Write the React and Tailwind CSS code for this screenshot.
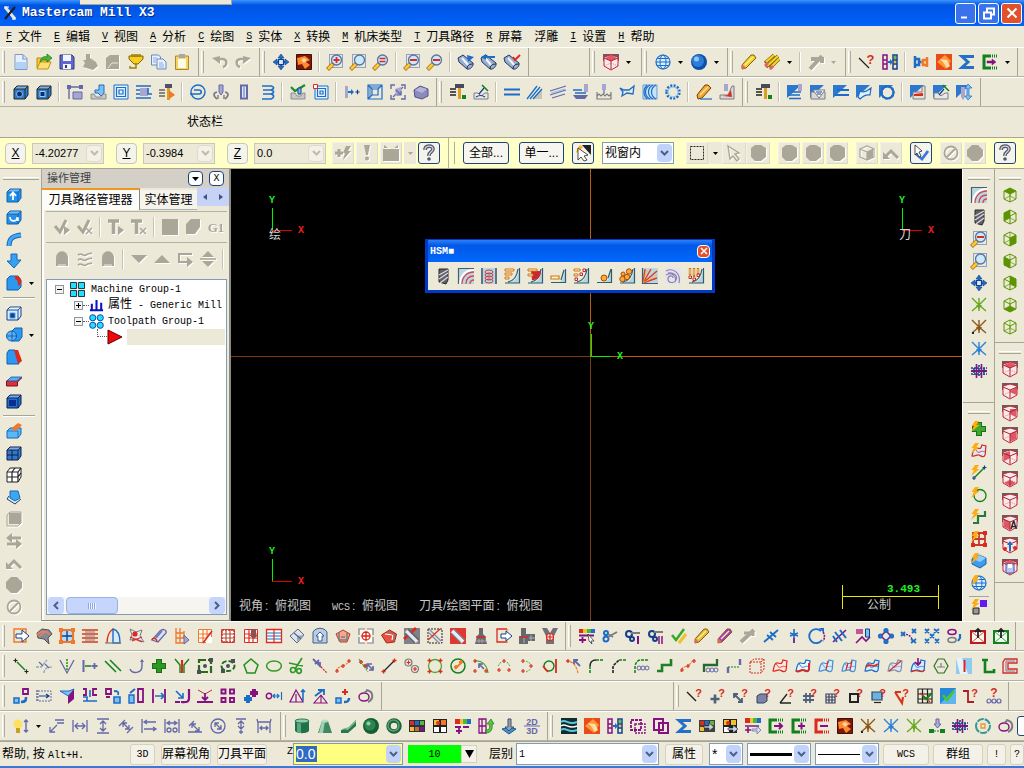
import React from "react";

/* ---------- drawing helpers for the 16x16 icon set ---------- */
const f = (c, d) => ({ fill: c, d });
const s = (c, d, w = 1.2, dash) => ({ stroke: c, d, w, dash });
const fs = (c, k, d, w = 1) => ({ fill: c, stroke: k, d, w });
const t = (c, x, y, size, v, sans) => ({ text: v, fill: c, x, y, size, sans });
const o = (x, y, r, q = r) => `M${x - r} ${y}a${r} ${q} 0 1 0 ${2 * r} 0a${r} ${q} 0 1 0 ${-2 * r} 0z`;
const box = (x, y, w, h = w) => `M${x} ${y}h${w}v${h}h${-w}z`;
const pl = (x, y, r = 2) => `M${x - r} ${y}h${2 * r}M${x} ${y - r}v${2 * r}`;

const B = "#1c6cc8", C = "#7cc0f4", N = "#153f88", P = "#85107f", R = "#dc2a1c", O = "#f07828";
const G = "#12801c", E = "#52a838", Y = "#f2c22c", K = "#222222", V = "#6468a8", W = "#a6a6d0";
const D = "#aaa798", H = "#7c7c80", S = "#dcecff", GD = "#5c9400";

const mag = (...x) => [s("#a06a10", "M0.500 15.500l6-6", 4), s("#ffc838", "M1 15l5-5", 2.6), fs("#cde8fc", "#5574a0", o(9.5, 6, 5), 1.3), ...x];
const dots = s("#3858a8", box(2.5, 0.5, 13, 13), 1, "1 1");
const q = (x = 11.5, y = 8.5) => t(R, x, y, 11, "?", true);
const cyl = (...x) => [fs("#9aaed0", "#26385c", "M0 4l5-3 10 8c1 3-3 7-6 6L1 8z"), s("#eef6ff", "M4 4l7 8", 2), s("#26385c", "M9 15c0-3 2-5 6-5"), ...x];
const tri = f("#2c78d0", "M0 1h14L0 14z");
const pencil = (c) => [fs(c, "#806010", "M1 11L10 1h3l2 3-10 10-4 1z"), s("#fff0a0", "M4 11l8-8", 1.2), f("#e86868", "M1 15v-5l4 4z")];
const globe = (c) => [fs("#d8eefc", c, o(8, 8, 7), 1.2), s(c, `${o(8, 8, 3, 7)}M1 8h14M2.500 4.500h11M2.500 11.500h11`, 1)];
const cubeTop = "M8 1L14 4L8 7L2 4z", cubeL = "M2 4L8 7V15L2 12z", cubeR = "M8 7L14 4V12L8 15z";
const vcube = (k, face) => [face ? f(k, face) : f("#f2f2e2", cubeTop), s(k, `${cubeTop}M2 4v8l6 3 6-3V4M8 7v8`, 1), s(k, "M2 12l6-3 6 3M8 9V1", 0.7)];
const rcube = (face, ...x) => [f("#705860", "M0 0h16v7L8 3 1 7H0z"), fs("#fbeaea", "#c02838", "M8 1l7 2v9l-7 4-7-4V3z"), f("#e05868", face), s("#b02030", "M1 4l7 3 7-3M8 7v8", 1), s("#c04050", "M1 12l7-3 7 3", 0.6, "1 1"), ...x];
const solid = (c, k = N) => [fs(c, k, "M1 5l3-3h11v9l-3 4H1z"), f("#ffffff66", "M1.500 5l3-2.500h10l-2.500 2.500z"), s(k, "M1 5h11v10M12 5l3-3", 0.9)];
const bolt = f("#ffac10", "M4 0h4L5.500 4h3L0 11l3-6H0.500z");
const axes = (c, ...x) => [s(c, "M8 1v13M8 8L1 1M8 8l7-7M8 8l-7 6M8 8l7 6", 1.4), f(c, "M5 8h6l-3 4z"), ...x];
const gridR = (c) => [fs("#fff", c, box(1.5, 1.5, 13)), s(c, "M2 6h12M2 10h12M6 2v12M10 2v12")];
const surf = (a, b, ...x) => [fs(a, b, "M1 13c1-5 2-9 5-8s4 1 5-3l4 1c-1 4 0 6-1 9s-4 1-6 0-4 2-7 1z", 1.2), s(b, "M4 7c2-2 1 4 5 2s4 1 5-1", 0.8), ...x];
const hsmEdge = [f("#b4d4e0", "M15 2v13H5c6-1 9-6 10-13z"), s("#2c5c70", "M15.500 0v15H1M4 14c6-1 9-6 10-13", 1.2)];
const hsq = f("#bcd6de", box(0, 0, 16));
const bits = (c, ...p) => p.map(([x, y]) => fs("#fff5e8", c, box(x, y, 2.5)));
const dim = (...x) => x.map((d) => s(V, d, 1.3));
const camC = (c, inner) => [s(c, "M9 2H2v12h7", 3), s(c, "M10 2h6M10 14h6", 3, "1 1"), s(P, inner, 2)];
const pin = (c) => [f("#1c7018", "M5 1h6v4h4v6h-4v4H5v-4H1V5h4z"), f(c, "M6 2h4v4h4v4h-4v4H6v-4H2V6h4z")];

const icons = {
  logo: [s("#e8e8d8", "M3 2l10 12", 3), s("#1c1c1c", "M13 2L3 14", 2), s("#fff", "M2 2h5M10 14h4", 1)],
  newFile: [fs("#e4f0fe", "#7c98cc", "M2 0.500h8l4 4v11H2z"), f("#b4d0f4", "M3 8h10v7H3z"), s("#7c98cc", "M10 1v4h4")],
  openFile: [fs("#f8cc38", "#b88810", "M1 14V4h5l2 2h5v3"), fs("#ffe070", "#c09018", "M1 15l3-7h11l-3 7z"), fs("#48b838", "#187018", "M4 8c1-5 4-6 7-5V0l5 4-5 4V6c-3-1-5 0-7 2z", 0.7)],
  saveFile: [fs("#6068c8", "#303888", "M1 1h12l2 2v12H1z"), f("#f4f4ff", "M4 1h8v6H4zM4 10h8v5H4z"), f("#303888", "M6 11h2v3H6z")],
  dPrint: [f(D, "M4 0h4v4l6 4 2 4-5 4-10-3 2-4-2-3h3z")],
  dPreview: [f(D, "M1 4l4-3h9v14H1V9z"), s("#ecead8", "M3 14l4-5h6", 1)],
  plug: [fs("#f6d020", "#806000", "M1 2h14v3l-5 5H6L1 5z"), s("#a08000", "M4 0v3M6 0v3M8 0v3M10 0v3M12 0v3M8 9v5H2v-2", 1.5)],
  copyFile: [fs("#e8f2ff", "#6888c0", "M0.500 1h7l2 2v8h-9z"), fs("#e8f2ff", "#6888c0", "M6 5h6l3 3v7H6z"), s("#88a8e0", "M2 4h4M2 6h3M2 8h3M8 9h4M8 11h5M8 13h5")],
  paste: [fs("#f4d468", "#b08820", box(1.5, 2, 13, 13.5)), f("#fffbe8", box(4, 5, 8, 9)), f("#a8a8a8", box(5, 0, 6, 4))],
  dUndo: [s(D, "M5 5H11c5 1 4 7 0 8", 2.4), f(D, "M0 4l8-2v8z")],
  dRedo: [s(D, "M11 5H5c-5 1-4 7 0 8", 2.4), f(D, "M16 4L8 2v8z")],
  pan: [fs(B, N, "M8 0l3 4H9v3h3V5l4 3-4 3V9H9v3h2l-3 4-3-4h2V9H4v2L0 8l4-3v2h3V4H5z", 0.6), fs("#d4ecff", N, box(5.5, 5.5, 5), 1.2)],
  dynamic: [fs("#7c1808", "#401008", box(0.5, 0.5, 15)), f("#ff8830", "M1 4l8-2 5 4-4 2 4 3-5 4-3-5-4 1z"), f("#ffd8a0", "M8 4l3 2-3 3-3-3z")],
  zoomIn: [dots, ...mag(s(R, pl(9.5, 6, 3), 1.8))],
  zoomWin: [dots, ...mag()],
  zoomTarget: mag(s(R, "M6.500 4.500h6M6.500 7.500h6", 1.6)),
  zoomOutDot: [dots, ...mag(s(R, "M6 6h7", 2))],
  zoomOut: mag(s(R, "M6 6h7", 2)),
  cylA: cyl(f(B, "M9 1l7 2-6 5z")),
  cylB: cyl(s(B, "M3 3h11", 2), f(B, "M5 0v6L0 3z")),
  cylC: cyl(s(R, "M9 3l2 3 5-5", 2)),
  redView: rcube(cubeTop),
  globe: globe(B),
  sphere: [f("#0c50a8", o(8, 8, 8)), f("#2c7cd8", o(7, 7, 6)), f("#8cc8fc", o(5.5, 5, 2.5))],
  eraser: pencil("#f4d020"),
  erasers: [s("#806010", "M1 9L10 1M6 14L15 5M2 13L14 2", 3.4), s("#f8d428", "M2 8L10 1M7 13L15 5M3 12L14 2", 2.2), f("#e86070", "M0 11l3-3 2 2-3 3zM5 15l3-4 2 2-3 3z")],
  dBrush: [s(D, "M2 15L14 2", 4), s(D, "M3 5h11v4", 4)],
  lineQ: [s(K, "M0 4l10 10", 1.3), t(R, 11.5, 10, 13, "?", true)],
  swap: [s(P, `${box(1, 1, 4, 14)}M1 6h4M1 10h4`, 1.5), s(N, `${box(11, 1, 4, 14)}M11 6h4M11 10h4`, 1.5), f(B, "M6 7h2V5l3 3-3 3V9H6z"), f("#58c848", box(12, 2, 2, 3)), f(Y, box(12, 7, 2, 2))],
  wires: [s(B, "M2 2v12M2 5h4v6H2M6 8h3", 2.5), s(O, "M14 3v10M14 6h-4v5h4M10 8H8", 2.5)],
  orangeSq: [f("#e84c18", box(0, 0, 16)), f("#ff9838", "M1 8l8-7 6 6-5 8z"), f("#ffe0a8", "M4 5l7 1 3 6-3 2-4-6z")],
  sigma: [s("#2470c8", "M15 2.500H3l6 5.500-6 5.500h12", 3)],
  greenC: [s(G, "M9 2H2v12h7", 3), s(G, "M10 2h6M10 14h6", 3, "1 1"), fs(P, P, "M5 7h5V5l4 3-4 3V9H5z", 0.5)],
  cubeHole: [...solid("#2c7ccc", K), fs("#102c68", "#80b8f0", o(6.5, 10, 3))],
  cubeSq: [...solid("#2c7ccc", K), fs("#102c68", "#a0ccf4", box(4, 7.5, 5))],
  contour: [s(V, "M2 15V3h12", 1.4), fs(W, V, box(6, 8, 9, 7)), f(V, "M0 1h4v4H0zM12 1h4v4h-4z")],
  drillDown: [fs(C, B, "M9 1h5v8l-3 3-3-3H5V6h4z"), fs("#c8c8c8", H, "M1 10h3l2 3h5l2-3h3v5H1z", 0.8)],
  pocket: [fs("#e4f4ff", B, box(1, 1, 14)), s(B, `${box(3.5, 3.5, 9)}${box(6, 6, 4)}`)],
  face: [f(W, box(4, 4, 8, 8)), s(B, "M0 2h15M0 6h4M12 4v6h4M0 10h4M0 14h15", 1.6)],
  toolArrow: [s(K, "M0 6h6M0 9h6M0 12h6", 1.2), f("#50506c", box(6, 0, 7, 4)), f("#d8a020", "M8 4h3v12H8z"), f(O, "M10 6l6 5-6 4z")],
  circMill: [s(B, o(8, 8, 7), 1.4), s(B, "M4 6h5M0 10h9M9 6c3 0 3 4 0 4", 1.6)],
  ringTool: [s(H, "M4 15C0 12 0 9 4 8M12 15c4-3 4-6 0-7", 1.8), fs(W, V, "M6 1h4v7l-2 3-2-3z"), s(H, "M5 15v-4M11 15v-4", 1.4)],
  slot: [fs(S, V, "M5 1.500h6v13H5z", 2), s(V, "M8 3v10", 1)],
  helix: [s(B, "M3 2h9c4 1 3 3 0 4H4M4 6h8c4 1 3 3 0 4H4M4 10h8c4 1 3 4 0 5H3", 1.6)],
  checkTool: [s("#18902c", "M1 3l4 4 10-6", 2.2), fs(C, N, box(8, 4, 3, 6)), fs("#c8c8c8", H, "M1 9h4l2 3h4l2-3h2v6H1z", 0.8)],
  pocketRed: [fs("#e4f4ff", B, box(2, 2, 13)), s(B, `${box(4.5, 4.5, 8)}${box(7, 7, 3)}`), fs("#fff", R, box(0.5, 0.5, 4))],
  arrowPlus: [f(W, box(1, 2, 3, 12)), f(B, "M4 7h3V5l3 3-3 3V9H4z"), s(N, pl(13.5, 8, 2.2))],
  squareIn: [s(B, `${box(1, 1, 14)}${box(5, 5, 6)}M1 1l4 4M15 1l-4 4M1 15l4-4`, 1.2), s(B, "M3 3h10M3 3v10", 1)],
  expand: [s(V, "M1 5V1h4M11 1h4v4M15 11v4h-4M5 15H1v-4", 1.4), s(V, "M3 13L13 3", 1.3), f(W, "M5 5l6-2 1 7-6 2z"), s(V, "M6 6l5 5M11 7v4H7", 1.2)],
  solidP: [fs("#8c8cbc", "#50508c", "M1 6l6-4 8 3v7l-6 3-7-2z"), f("#b4b4dc", "M2 6l5-3 7 2-5 4z")],
  toolMill: [s(K, "M0 5h6M0 8h6M0 11h6", 1.4), f("#48485c", box(5, 0, 9, 4)), f("#d8a020", "M8 4h3v11H8z"), f(G, box(12, 11, 4, 4))],
  machine: [s(G, "M9 1l6 6", 1.6), fs("#e8e8e8", H, "M1 9h4l3 3 4-3h3v6H1z"), s(N, "M11 4L6 10M3 13c3-2 6-2 9 0")],
  parLines: [s(B, "M0 5.500h16M0 10.500h16", 2)],
  hatchTri: [f("#c8c4b8", "M6 15L15 5v10z"), s(B, "M0 15L10 2M3 15L13 3M6 15L15 5", 1.3)],
  raster: [s(V, "M0 7l16-5M0 11l16-5M2 14l13-4", 1.3), s(C, "M1 9l14-4", 1)],
  scallop: [f(W, box(11, 0, 4, 8)), s(B, "M0 6h9M2 9h11", 1.6), f(V, "M0 11h15l-3 4H3z")],
  plunge: [f(W, box(6, 0, 4, 6)), s(V, "M8 6v4"), s(H, "M1 8v7h14V8M1 12l2-2 2 2 2-2 2 2 2-2 2 2 2-2", 1.2)],
  blend: [s(B, "M1 4l4 2h5l5-4-1 8-6-1-5 3 1-4z", 1.3)],
  waves: [fs("#c4e4f8", B, box(1, 1, 14), 0.6), s(B, "M14 1C8 4 8 12 14 15M11 1C5 4 5 12 11 15M8 1C2 4 2 12 8 15M5 1C1 5 1 11 5 15", 1.2)],
  circDash: [s(B, o(8, 8, 6.5), 2.5, "2 1.400"), s(C, o(8, 8, 5), 1)],
  pencilBlue: [fs("#f0a830", "#704000", "M1 11L9 1h3l3 3-9 10-4 1z"), s("#ffe0a0", "M4 11l8-8", 1.2), s(B, "M4 15h12", 1.2)],
  leftover: [f(W, box(5, 0, 4, 7)), fs("#d8d8d8", H, "M1 11h8l4-9h2v13H1z"), f(R, "M4 12l5-1 3-5 1 7z")],
  sfA: [tri, f(W, box(11, 0, 4, 7)), s(B, "M4 8h10M1 11h12M2 14.500h12", 1.6)],
  sfB: [tri, fs("#d8d8d8", H, "M1 8h14v7H1z"), fs("#fff", H, "M3 6h12l-6 8z", 1), s(N, "M6 8h6M7 10h4")],
  sfC: [tri, s(B, "M4 6h12M2 11h14", 2)],
  sfD: [tri, fs("#e4f0f8", B, "M4 7c4 2 7 0 11-3l-1 7c-4-1-7 1-10 4l-2-2z", 1.2)],
  sfE: [tri, fs("#ece9d8", B, o(8.5, 8.5, 6), 2, "2 1.500"), s(B, o(8.5, 8.5, 6), 2.4, "2 1.500")],
  sfF: [tri, fs("#e0e0e0", H, "M3 15h12V2h-3v6H3z"), f(R, "M4 10l9-1v3H4z")],
  sfG: [tri, s(G, "M10 1l6 6", 1.5), fs("#e8e8e8", H, "M1 9h4l3 3 4-3h3v6H1z"), s(N, "M11 5L6 11")],
  sfH: [tri, f(W, "M5 3h4v10l-2 3-2-3z"), fs(C, B, "M12 0l4 4h-3v8h3l-4 4-3-4h2V4H9z", 0.7)],
  /* coordinate bar */
  dFast: [s(D, pl(4, 8, 4), 3), f(D, "M11 1h5l-3 5h3l-8 9 2-7H8z")],
  dBang: [f(D, `M5 0h6L9 10H7z${o(8, 13.5, 2)}`)],
  dPanel: [f(D, "M0 4h16v12H0zM1 0l4 3H1zM15 0l-4 3h4z"), s("#ecead8", "M4 4l2-2M12 4l-2-2")],
  help: [s("#505868", "M4 5c0-5 8-5 8-1 0 3-4 3-4 6v1", 3.6), s("#d4d8e0", "M4 5c0-5 8-5 8-1 0 3-4 3-4 6v1", 1.2), f("#505868", o(8, 14, 1.8))],
  cursorBolt: [f(K, "M7 0h9v10z"), f("#ffb020", "M5 0l3 2-3 3-4 3 1-4z"), fs("#fff", K, "M3 3l10 7-4 1 3 4-3 1-3-4-3 3z", 0.8)],
  dashBox: [s(K, box(1.5, 1.5, 13), 1, "2 1")],
  dCursor: [s(D, "M2 1l11 7-4 1 4 5-2 2-4-5-3 3z", 1.4)],
  dHex: [f(D, "M5 0h6l5 3v9l-5 4H5l-4-4V3z")],
  dCube: [s(D, "M1 4l7-3 7 3v8l-7 3-7-3zM8 7v8M1 4l7 3 7-3"), f(D, "M8 7l6-3v8l-6 3z")],
  dArc: [s(D, "M2 12l6-6 7 7", 3), f(D, "M0 7v7h7z")],
  cursorCheck: [s("#3878e0", "M3 9l6 5 6-8", 2.8), fs("#fff", K, "M2 0l7 6-3 1 2 4-2 1-2-4-2 2z", 0.8)],
  dNo: [s(D, `${o(8, 8, 6.5)}M3.500 12.500l9-9`, 1.8)],
  dDisc: [f(D, "M5 0h6l5 5v6l-5 5H5l-5-5V5z")],
  /* solids */
  extrude: [...solid("#2490e8", "#1060b0"), s("#fff", "M7 13V6M4 9l3-3.500L10 9", 1.8)],
  revolve: [...solid("#2490e8", "#1060b0"), s("#fff", "M4 8c0 5 6 5 8 1M10 9h2v3", 1.6)],
  sweep: [s("#1868b8", "M3 15c0-7 3-10 12-11", 5), s("#48a8f4", "M3 15c0-7 3-10 12-11", 3)],
  loft: [fs("#3ca0f0", "#1868b8", "M5 1h6v6h4l-7 8-7-7h4z")],
  filletS: [fs("#2c98f0", "#1060b0", "M1 4l3-3h8l3 4v7l-3 3H1z"), f(R, "M9 1c5 0 7 3 6 8l-3 2c0-4 0-6-3-7z")],
  shellS: [...solid("#d4ecff", N), fs(N, "#4898e0", box(4, 8, 5))],
  boolS: [fs("#2c98f0", "#1060b0", "M6 4l3-3h7v9l-3 4H6z"), fs("#58b4f8", "#1060b0", o(5.5, 9, 5)), s(N, "M6 4v10M1 9h10", 0.7)],
  draftS: [fs("#2c98f0", "#1060b0", "M1 4l2-3h6l4 14H1z"), f(R, "M8 1h4l4 11-4 3z")],
  trimS: [fs("#d8303c", "#801020", "M0.500 10l5-3h10l-4 4v4H0.500z"), fs("#50b0f8", N, "M1 10l4-4h11l-5 4z", 0.7)],
  cubeDark: [...solid("#2070d0", "#101c48"), f("#0c2c90", box(3, 7, 7, 6))],
  pushS: [fs("#58b8f8", "#1868b0", "M1 8l3-3h11v6l-3 4H1z"), s("#1868b0", "M1 8h11v7", 0.8), f(O, "M7 4l5-4 4 2-5 5-5 1z")],
  cubeGrid: [...solid("#3078c8", "#101c48"), s("#101c48", "M6 5v10M1 10h11", 1)],
  cubeWire: [fs("#fff", K, "M1 5l3-4h11v9l-3 5H1z"), s(K, "M1 5h11v10M12 5l3-4M6 5v10M1 10h11M6 5l3-4M12 10l3-4")],
  solidSurf: [fs("#38a8f0", "#1868b0", "M4 2h8l2 7-5 3-5-3z"), s(N, "M3 7l-2 3 8 5 6-5", 1)],
  dBlock: [fs("#ecead8", D, "M1 4l3-3h11v11l-3 3H1z"), f(D, box(3, 2, 12, 11))],
  dSwap: [s(D, "M4 5h11M1 11h11", 3), f(D, "M6 0v10L0 5zM10 6v10l6-5z")],
  /* manager */
  dCheckPlay: [s(D, "M1 7l5 6L12 1", 3), f(D, "M10 7l6 4-6 5z")],
  dCheckX: [s(D, "M1 7l5 6L12 1", 3), s(D, "M9 9l6 6M15 9l-6 6", 1.5)],
  dTPlay: [s(D, "M0 2h11M5.500 2v13", 3.5), f(D, "M10 7l6 4-6 5z")],
  dTX: [s(D, "M0 2h11M5.500 2v13", 3.5), s(D, "M9 9l6 6M15 9l-6 6", 1.5)],
  dSquare: [f(D, box(0, 0, 16))],
  dBlob: [f(D, "M6 0h9v8l-5 7H1V5z")],
  dG1: [t(D, 8, 13, 13, "G1")],
  dLock: [f(D, "M2 7c0-9 12-9 12 0v8H2z"), s("#fff", "M4 14h8", 0.8)],
  dWaves: [s(D, "M1 4c4-3 5 2 8 0s4-1 6-2M1 9c4-3 5 2 8 0s4-1 6-2M1 14c4-3 5 2 8 0s4-1 6-2", 1.6)],
  dDown: [f(D, "M0 4h16l-8 8z")],
  dUp: [f(D, "M0 12h16L8 4z")],
  dStep: [s(D, "M15 3H2v8h9", 2), f(D, "M10 6l6 5-6 5z")],
  dUpDown: [f(D, "M8 0l6 6H2zM8 16l6-6H2z"), s(D, "M0 8h16", 1.6)],
  /* HSM */
  drill: [fs("#606068", "#28282c", "M4 1h9v11l-2 4-7-2z"), s("#d8d8dc", "M4 7l9-5M4 11l9-6M5 15l8-6", 1.4)],
  hArc: [hsq, s("#fff", "M2 16C2 8 7 2 16 2", 2), s("#d04858", "M4 16C4 9 9 4 16 4M8 16c0-5 3-8 8-8M12 16c0-3 2-4 4-4", 1.3), s("#406078", "M0.500 16V0.500H16")],
  hRings: [hsq, s("#c83848", `${o(8, 4, 4, 2)}${o(8, 7, 4, 2)}${o(8, 10, 4, 2)}${o(8, 13, 4, 2)}`, 1), s("#406078", "M1 0v16M15 0v16", 1.6)],
  hRough: [...hsmEdge, fs("#fff2c8", "#d07818", `${box(1, 1, 9, 2)}${box(1, 5, 7, 2)}${box(1, 9, 4, 2)}`)],
  hRest: [...hsmEdge, f("#c82830", "M4 3h10c0 7-4 9-9 9z"), fs("#fff2c8", "#d07818", `${box(1, 1, 9, 2)}${box(1, 6, 5, 2)}`)],
  hFlat: [f("#b4d4e0", "M10 14c3-2 4-6 5-12v12z"), s("#2c5c70", "M1 14.500h14.500V1M11 12l3-10", 1.2), fs("#fff2c8", "#d07818", box(1, 8, 8, 3), 1.2)],
  hBits: [...hsmEdge, fs("#fff2c8", "#d07818", `${box(1, 1, 6, 2)}${box(1, 6, 4, 2)}`), ...bits("#b82838", [10, 1], [7, 5], [2, 10])],
  hBall: [f("#b4d4e0", "M9 14c4-2 5-6 6-12v12z"), s("#2c5c70", "M1 14.500h14.500V1M12 10l3-9", 1.2), fs("#ffa838", "#a05010", o(8, 10, 3))],
  hBalls: [...hsmEdge, fs("#ffa838", "#a05010", o(3.5, 11, 2.7)), fs("#ffa838", "#a05010", o(8, 9, 2.7)), fs("#ffa838", "#a05010", o(10, 3.5, 2.7)), fs("#ffa838", "#a05010", o(4, 6, 2))],
  hRadial: [hsq, s("#e03828", "M1 15L3 1M1 15L9 1M1 15l14-12M1 15l14-5", 1.4), s("#ffb028", "M1 15L5 2M1 15l14-8", 0.8), s("#406078", "M0.500 0v15.500H16")],
  hSpiral: [f("#e4e4ec", box(0, 0, 16)), s("#9080b0", "M1 3c8-4 15 3 13 12M1 7c6-4 11 2 9 7M8 10c0-3-5-3-5 1s6 5 8 1-2-8-8-7", 1.2)],
  hTeeth: [...hsmEdge, s("#d07818", "M2 0v7M6 0v9M10 0v6", 2.4), s("#fff2c8", "M2 1v5M6 1v6M10 1v4", 0.8), ...bits("#c02828", [1, 8], [5, 10], [9, 6])],
  /* axes, views */
  gvTop: vcube(GD, cubeTop), gvBackL: vcube(GD, "M2 4l6-3v8l-6 3z"), gvRight: vcube(GD, cubeR), gvLeft: vcube(GD, cubeL),
  gvBack: vcube(GD, "M8 1l6 3v8l-6-3z"), gvBot: vcube(GD, "M2 12l6-3 6 3-6 3z"), gvIso: vcube(GD),
  rv1: rcube(cubeTop), rv2: rcube("M8 8l7-4v8l-7-3z"), rv3: rcube("M8 4l6 0v8l-6-3z"), rv4: rcube(cubeR), rv5: rcube("M2 4l6-2v7l-6 3z"),
  rv6: rcube("M2 12l6-3 6 3-6 3z"), rv7: rcube("M8 7h0z"), rv8: rcube(cubeL, t(K, 11.5, 14, 10, "A", true)),
  rv9: rcube("M8 7h0z", f(B, "M8 4l3 4H9v6H7V8H5z"), f(R, o(3, 12, 2) + o(13, 11, 2))),
  rv10: rcube(cubeTop, fs("#b8c8f4", "#5058a8", box(4, 5, 8, 9)), f("#fff", box(6, 5, 4, 4))),
  axGreen: axes("#68a820"), axBrown: axes("#8c5818", f(K, "M1 13h2v2H1z")), axBlue: axes("#2c80d8"),
  gridPlus: [s(P, "M5.500 1v14M10.500 1v14", 1.6), s(P, "M0 8h16", 2), s(N, "M0 5h16M0 11h16M3 5v7M8 2v12M13 5v7", 1.6, "2 1")],
  qPlus: [...pin("#40a830"), bolt], qSurf: [...surf("#d8ecff", R), bolt],
  qLine: [s(G, "M4 12l9-9", 1.4), s(N, pl(13.5, 2.5) + pl(3, 13)), bolt], qCirc: [s(G, o(9, 8.5, 6), 1.3), bolt],
  qStep: [s("#2c7838", "M2 14h5V7h7V2", 2.2), bolt], qGrid: [s("#c83828", `${box(2, 2, 12)}M2 8h12M8 2v12`, 1.8), f(R, box(0, 12, 4) + box(12, 12, 4) + box(12, 0, 4)), bolt],
  qSolid: [fs("#3c9cf0", "#1860b0", "M1 6l7-4 7 3v6l-6 4-8-4z"), f("#90ccfc", "M2 6l6-4 7 3-6 4z"), bolt], qGlobe: [...globe(B), bolt],
  qAll: [f("#6818f0", box(9, 1, 7)), fs("#989898", K, box(2, 9, 6)), bolt],
  /* surfaces row */
  a1: [s(O, box(1, 1, 12, 13), 1.4), fs("#fff", N, "M3 6h6V2l7 6-7 6v-4H3z")],
  a2: [fs("#888890", "#50505c", "M1 5l5-4 7 1 3 4-4 4 1 6-5-5-6-1z"), s("#f08060", "M1 7c4-5 8-4 13-1M3 9c3-4 6-5 9-6", 1.3)],
  a3: [fs("#b4dcff", O, box(2, 2, 12), 2.2), s(N, "M8 3v10M3 8h10", 1.4), f(O, box(0, 0, 4) + box(12, 0, 4) + box(0, 12, 4) + box(12, 12, 4))],
  a4: [s("#d83818", "M0 2h16M0 6h16M0 10h16M0 14h16", 1.3), s(H, "M3 4h10M3 8h10M3 12h10", 1)],
  a5: [fs("#d8ecf8", B, "M8 15V1c5 1 7 6 7 14z", 1.4), s(R, "M2 15C2 7 5 3 8 1", 1.4), s(H, "M0 15h16")],
  a6: [fs("#e8eaf2", H, "M2 1l6 3 6-2-2 6 4 6-8-3-6 1 2-5z"), f(R, o(7, 6, 2.6)), s(R, "M2 9l12 5M4 13l10-4")],
  a7: [fs("#d8e0ec", V, "M1 12L9 3c3-3 7-1 6 2l-8 9z", 1.3), s(R, "M1 12c0-3 5-2 5 2"), s(V, "M5 10l6-7")],
  a8: [s(O, "M2 0v15h9M2 5h8M2 10h8M6 0v15M10 3v8", 1.3), fs(W, V, "M10 7l5 5-5 4z")],
  a9: [...gridR(O), f("#fff", "M9 9h6v6H9z"), s(R, "M6 15l9-12", 1.6)],
  a10: [...gridR("#b05040"), s(R, box(2, 2, 12), 1.4, "2 1")],
  a11: [...gridR(R), f("#905050", "M8 1h5v6h2l-4 4-5-4h2z")],
  a12: [fs("#fff", R, box(0.5, 1.5, 15, 13), 1.3), s(B, "M1 5h14M1 8h14M1 11h14", 1.2), s(R, "M8 2v12")],
  a13: [fs("#dce4ec", "#586880", "M1 8l8-7 6 6-7 8z"), f("#90a8c8", "M8 8l7-1-7 7z"), s("#586880", "M5 5l7 6")],
  a14: [fs("#b8cce4", "#48607c", "M1 4c3-5 11-5 14 0v11H1z"), fs("#fff", N, "M8 4l4 4h-2v5H6V8H4z", 0.8)],
  a15: [fs("#f4a890", "#c03020", "M1 6l7-4 7 4-3 8H5z"), s(H, "M4 4v8h8V5M6 9h4", 1.5)],
  a16: [fs("#fff", H, box(1, 1, 14), 1.2), s("#ece9d8", "M0 8h16M8 0v16", 2), s(R, `${o(8, 8, 4)}${pl(8, 8, 4)}`, 1.3)],
  a17: [fs("#e85040", "#a02818", "M0.500 7l8-5 7 4-2 8-8 1z"), s("#fff", "M4 6l8 1-1 5", 1.2), s(H, "M6 4l7 3v6", 1)],
  a18: [f("#808088", box(0, 0, 16)), s(R, "M0 11L12 0", 3), s("#e4e8f0", "M2 3l11 11", 3.5), s("#606068", "M4 1l11 11M1 5l10 10")],
  a19: [s(K, box(1, 1, 14), 1, "2 1"), s("#88909c", "M2 3l11 11", 4), s("#e0e4ec", "M2 3l11 11", 1.4), s(R, "M1 12L13 1", 1.2)],
  a20: [f("#e03830", box(0, 0, 16)), s("#e8ecf4", "M2 3l11 11", 4), s(H, "M4 1l11 11M1 5l10 10")],
  a21: [f("#686870", "M6 0h4v6l2 2 2 8H2l2-8 2-2z"), s(R, "M3 9h10", 1.5), s("#b8b8c0", "M6 11v4M9 11v4M3 13h10", 0.8)],
  a22: [s(R, "M11 1H1v13h10", 1.3), s(O, "M11 1v14", 1.3, "2 1"), fs("#fff", N, "M5 6h5V3l6 5-6 5v-3H5z")],
  a23: [f("#686870", "M2 0h5v6h9v7H9v3H0V8h2z"), s(R, "M1 9h8", 1.3), s("#c0c0c8", "M5 10v5M10 10h6M12 7v6", 0.8)],
  a24: [f("#707078", "M0 0h5l3 5 3-5h5l-4 8v8H4V8z"), fs("#f0e4e4", R, o(8, 9, 3.5), 1.2), s(R, pl(8, 9, 4), 1.2)],
  b1: [f(R, box(0, 1, 4, 4)), f(Y, box(4, 1, 4, 4)), f("#48b838", box(8, 1, 4, 4)), f(B, box(12, 1, 4, 4)), s(P, "M0 12h7M3.500 9v6M0 7.500h15", 1.8), fs("#fff", K, "M9 6l6 7-3 0 1 3-3-3z", 0.7)],
  b2: [s(B, o(4, 11, 2.5) + o(4, 5, 2), 2), s(H, "M6 9l9-5M6 6l5 3", 2)],
  b3: [s(N, o(4, 6, 3) + o(7, 11, 2), 2), s(H, "M6 5h9", 2), s(P, "M13 8v8", 2)],
  b4: [s(N, o(4, 6, 3) + o(7, 11, 2), 2), s(H, "M6 4h9", 2), s(P, "M11 8v8M14 8v8", 1.5)],
  b5: [s("#38a828", "M1 7l4 5L13 1", 2.5), s(Y, "M8 15l7-9", 3)],
  b6: pencil("#e8b830"), b7: pencil("#a838c0"), dPencil: [s(D, "M1 14L14 2", 4), s(D, "M4 5h9v3", 3)],
  b8: [s(B, "M1 14L15 2M4 7l6 5M7 4l6 5", 1.8)], b9: [s(B, "M8 1v14M4 5l8 3M12 5l-8 3", 1.6), s(P, "M8 10v5", 1.4)],
  b10: [s(B, "M12 3A7 7 0 1 0 13 12", 1.8), s(P, "M14 4c2 3 2 6 0 9", 1.6, "2 1"), f(B, "M10 0h5v5z")],
  b11: [s(P, "M1 14L14 2", 1.6), s(B, "M3 4l7 9M8 2l6 8M1 8l4 6", 2)],
  b12: [f("#c05898", box(1, 1, 7, 5)), s(P, "M1 15l6-6 4 4 4-4", 1.6), fs(C, N, box(10.5, 1, 4, 8))],
  b13: [s(P, "M8 3l5 5-5 5-5-5z", 1.5), s(B, o(8, 2.5, 1.5) + o(8, 13.5, 1.5) + o(2.5, 8, 1.5) + o(13.5, 8, 1.5), 2.2)],
  b14: [s(P, "M2 6c6 0 9 3 10 8", 1.4, "2 1"), s(B, "M0 4l4 4M4 4L0 8M11 1l4 4M15 1l-4 4M10 11l5 4M15 11l-5 4", 1.8)],
  b15: [s(B, "M1 1l4 4M5 1L1 5M10 1l5 4M15 1l-5 4M6 6l4 4M10 6l-4 4M1 11l4 4M5 11l-4 4M11 11l4 4M15 11l-4 4", 1.8)],
  b16: [s(P, o(5, 4, 4, 2.5), 1.6), s(H, o(5, 12, 4, 2.5), 1.6), s(B, "M13 6v4l-2 3", 2.2)],
  b17: [fs("#fff8f0", "#b81c1c", box(1, 3, 14, 12), 2), s("#b81c1c", "M1 3l7 6 7-6M1 15l7-6 7 6", 0.8), s(K, "M8 10V1M5 4l3-3 3 3", 1.8)],
  b18: [fs("#f0fff0", G, box(1, 3, 14, 12), 2), s(G, "M1 3l7 6 7-6M1 15l7-6 7 6", 0.8), s(K, "M8 10V1M5 4l3-3 3 3", 1.8)],
  /* wireframe row */
  c1: [s(G, "M4 4l8 8", 1.5), s(K, pl(2.5, 2.5) + pl(13.5, 13.5))], c2: [s("#90a8b8", "M0 9h5l6-7M8 15c0-4 3-6 8-6", 1.4, "3 1"), s(V, "M3 4l4 4M9 6l4 4", 1.1)],
  c3: [s(V, "M1 2l7 13 7-13", 1.3), s(E, "M8 1v12", 2, "2 1")], c4: [s(V, "M1.500 2v12", 2), s(G, "M3 8h6", 1.5), s(V, pl(12.5, 8, 3), 1.8)],
  c5: [s(G, "M0 3l11 11M5 2l11 11", 1.5)], c6: [s(V, "M14 2v6c0 8-10 8-12 3", 1.4), f(V, "M12 4l2-3 2 3z")], c7: pin("#2c9820"),
  c8: [s(G, "M1 1l5 6v8M15 1l-5 6v8", 1.4), s(R, "M8 2v13", 2.2)],
  c9: [s("#286820", box(2, 2, 12), 2.2, "7 2"), f("#485058", o(8, 8, 2) + box(0, 12, 4) + box(12, 0, 4))],
  c10: [s("#286820", o(8, 8, 6.5, 5), 2, "5 2"), f("#485058", o(8, 8, 2) + box(11, 1, 4) + box(1, 11, 4))],
  c11: [s("#209020", "M8 1l7 6-3 8H4L1 7z", 1.5)], c12: [s("#389828", o(8, 8, 7.4, 5), 1.5)],
  c13: [s("#309828", `M13 0L6 11M0 5l14 3${o(4, 12, 2.5)}${o(10, 13, 2.3)}`, 1.7)], c14: [s(V, "M1 1l8 8M3 6l4-4M5 5h3v4", 1.8), s(R, "M9 9l6 6", 1.3, "2 1")],
  c16: [s(O, "M2 13c0-6 8-3 12-10", 1.2, "2 1"), s(R, pl(2, 13) + pl(8, 8) + pl(14, 3))],
  c17: [s(V, "M9 6l6 6M9 11V6h5M11 12h4V8", 1.7), s(R, pl(3, 4) + pl(7, 8), 1.6), s(E, "M1 1l9 13", 1.2, "2 1")], c18: [s(K, "M3 13L13 3"), s(R, pl(2.5, 13.5) + pl(13.5, 2.5), 1.3)],
  c19: [s(H, o(4.5, 4.5, 3.5) + o(11, 11, 3.5)), s(R, pl(4.5, 4.5) + pl(11, 11))], c20: [s(E, o(8, 8, 6.5), 1.3), s(R, pl(2.5, 2.5) + pl(13.5, 2.5) + pl(13.5, 13.5) + pl(2.5, 13.5), 1.3)],
  c21: [s(G, o(8, 8, 7), 1.5), s(O, `M5 11l6-6${pl(6, 9)}${pl(11, 4)}`, 1.8)], c22: [s(E, "M2 3c7-1 12 4 13 12", 1.3), s(R, pl(2, 3) + pl(2, 13) + pl(13, 13)), s(V, "M6 6l5 5M6 10V6h4", 1.7)],
  c23: [s(R, pl(8, 3) + pl(3, 12) + pl(13, 12), 1.2), s(E, "M2 8l3-4M11 4l3 4", 1, "2 1")], c24: [s(R, pl(4, 3) + pl(12, 8) + pl(4, 13), 1.2), s(E, "M7 3l5 3M7 14l5-3", 1, "2 1")],
  c25: [s(G, o(7, 8, 5), 1.4), s(R, "M14 1v14M1 8l5 6", 1.8)], c26: [s(O, "M1 3c7 0 10 4 12 12", 1.2, "3 1"), s(V, "M9 2l6 6M9 6V2h4", 1.8), s(R, pl(3, 3))],
  c27: [s(G, "M2 15V8M8 2h8", 1.5, "3 1"), s(K, "M2 8c0-3 2-6 6-6", 1.6)], c28: [s(K, "M2 15V8l6-6", 1.6, "3 1"), s(G, "M8 2h8", 1.4, "3 1")],
  c29: [s(G, "M1 15V8c1-4 3-6 6-6h8", 1.5, "3 1"), s(V, o(5, 10, 2) + o(9, 10, 2) + o(13, 10, 2), 1)], c30: [s("#208028", "M0 13h5V7h9V1", 2.6)],
  c31: [s(O, "M1 14c1-6 5-5 7-6s3-5 7-6", 1.2, "2 1"), s(R, pl(2, 12) + pl(8, 8) + pl(14, 3))], c32: [s("#286830", "M1 14V7h13V1", 2.3), s(V, o(5, 12, 2) + o(9, 12, 2) + o(13, 12, 2), 1)],
  c33: [s(V, "M2 15V9M14 7V1", 2.4), s(G, "M2 9h12", 1.2, "2 1")], c34: [s(R, `${box(1, 4, 11, 11)}M1 4l4-3h10v10l-3 4M12 4l3-3`, 1, "2 1")],
  c35: surf("#fde4e0", R), c36: surf("#ecf6ff", B, s(R, "M1 13c3 2 4-1 7-1s5 3 6-1V5", 2)), c37: surf("#d8ecff", "#4890d0", s(R, "M10 3L8 12")), c38: surf("#d8ecff", "#4890d0", s(R, "M7 5L5 12M11 3l-2 9")),
  c39: surf("#d8ecff", B, s(R, "M2 9c4-5 6 2 12-3", 1.8)), c40: surf("#e0e8f0", "#8090b0", s(R, "M2 13L14 3")), c41: surf("#d8ecff", B, s(P, "M8 0v7M5 4l3 3 3-3", 1.6), s(R, "M1 14c5-4 9 2 14-2")),
  c42: [s("#307020", "M5 1h6l4 7-4 7H5L1 8z", 1.2), s(H, "M4 9h8M8 5v4")], c43: [f("#90ccf0", box(0, 0, 16)), f("#e8f2fa", "M0 0h6l6 16H4z"), s(R, "M8.500 2v12", 2)], c44: [s(G, "M3 2h6M6 2v12h9v-3", 2.6)],
  c45: [fs("#f8d8d4", "#c83030", "M15 5V1H3L1 4v11h14v-4H6V5z", 1.3), s(H, "M13 3H4v10h9", 1)],
  /* transform row */
  e1: [s(P, box(10, 1, 5), 1.8), fs(C, B, box(1, 10, 5), 1.5), s(B, "M8 14c5 0 5-2 5-5", 2.6)], e2: [s(V, "M1 2v12", 1.4, "2 1"), s(V, box(2, 3, 13, 10), 1, "2 1"), s(N, "M3 8h9M10 6l3 2-3 2")],
  e3: [fs(C, B, "M1 3h9l5-2-4 8z"), f(P, "M9 8l6-7v10l-6 5z")], e4: [s(P, "M1 1h3v6H1M15 1h-4v6h4", 1.8), s(B, "M1 9h4v4H1M5 13h10M8 2v7", 1.6)],
  e5: [s(P, `${box(1, 1, 5)}M1 9h4`, 1.8), fs(C, B, box(9, 9, 6), 1.6), s(B, "M9 3c4 0 5 1 4 4", 1.8)], e6: [s(P, box(10, 1, 5, 13), 1.8), fs(C, B, box(1, 7, 5, 8), 1.4), s(B, "M2 5l5-4", 2)],
  e7: [s(P, "M2 1v14M14 1v14", 1.8), s(B, "M4 8h9M10 5l3 3-3 3", 1.6)], e8: [s(P, "M15 1v9c0 5-4 4-8 4M1 14h5", 2.2), s(B, "M2 3l7 7M9 5v5H4", 1.6)],
  e9: [s("#c02848", "M1 2l7 4 7-4", 1), s(P, "M0 14h16M8 5v7M5 9l3 3 3-3", 1.8)], e10: [s(P, box(1.5, 1.5, 4) + box(1.5, 10, 4) + box(10, 10, 4) + box(10, 1.5, 4), 1.9)],
  e11: [s(B, pl(5, 11, 4), 4), s(P, pl(11, 5, 4), 4)], e12: [s(P, o(3, 8, 2.7), 1.4), s(B, "M7 8h6M9 6L7 8l2 2M11 6l2 2-2 2M15.500 4v8", 1.2)],
  e13: [s(P, "M7 2L1 14h13zM7 6v8", 1.2), s(B, "M14 2v11M12 4l2-2 2 2", 1.6)], e14: [s(P, "M9 7L2 15h13zM9 7v8", 1.1), s(B, "M3 8l8-6M6 2h6v5", 1.8)],
  e15: [fs(C, B, box(1, 10, 5), 1.5), s(B, "M9 14c4 0 5-1 5-4", 2.6), s(R, pl(10, 4, 3), 2)], e16: [s(P, o(6, 9, 5, 4), 1.4), s(H, "M8 2c8 1 8 9 2 12M6 5l4-3", 2)],
  g1: [s(K, "M0 4l9 9", 1.4), q()], g2: [s("#50607c", pl(5, 11, 4.5), 2.6), q()], g3: [s("#50607c", "M1 6l8 8M1 10V6h4M9 10v4H5", 1.8), q()], g4: [fs("#7884a8", "#384060", "M1 8l3-2h7v7l-3 2H1z"), q()],
  g5: [s(K, "M1 15L8 6M1 15h11", 1.3), q()], g6: [s("#50607c", "M4 5v10M8 5v10M1 8h11M1 12h11", 1.8), q()], g7: [s("#384060", `${box(1, 6, 9)}M4 6v9M7 6v9M1 9h9M1 12h9`), q()], g8: [s(K, box(2, 6, 8), 2), q()],
  g9: [fs("#68b4e0", "#384060", box(1, 4, 10, 8), 1.2), s(K, "M3 14.500h7"), q()], g10: [s("#d83818", "M1 4l7 11 1-6M1 4l6 0", 2.2), q()], g11: [s(K, `${box(1, 1, 14)}M5.500 1v14M10.500 1v14M1 6h14M1 11h14`), s(R, "M3 5l10 9"), s(G, "M6 8l3 3 6-6", 2)],
  g12: [f("#2488d8", box(0, 0, 16)), f("#60b4f0", "M0 16L16 0v16z"), s("#48c820", "M3 7l4 5 7-9", 2.5)], g13: [s("#a82020", "M0 3h5v11h6", 1.8), q()], g14: [t(R, 8, 9, 12, "?", true), s(V, o(3, 13, 2) + o(8, 13, 2) + o(13, 13, 2), 1.2)],
  /* drafting row */
  bulb: [f("#ffe060", o(5, 6, 4.5)), f("#c8a020", "M3 10h4v5H3z"), s(V, "M13 2v12M11 4l2-2 2 2M11 12l2 2 2-2", 1.4)],
  h1: dim("M1 14l7-7M1 9v5h5", "M6 2h9M8 5h7"), h2: dim("M1 2v12M15 2v12M3 8h10M6 5L3 8l3 3M10 5l3 3-3 3"), h3: dim("M2 1h12M2 15h12M8 3v10M5 6l3-3 3 3M5 10l3 3 3-3"),
  h4: dim("M1 8l6-6M9 15l6-6M5 5l6 6M5 9V5h4M11 7v4H7"), h5: dim("M1 1v14M3 4h12M3 11h12M6 2L3 4l3 2M12 9l3 2-3 2"), h6: dim("M1 1v14M15 1v14M3 5h10M6 3L3 5l3 2M10 3l3 2-3 2", o(5, 12, 2) + o(11, 12, 2)),
  h7: dim("M2 8l5-5M1 14h14M5 6l7 7M5 10V6h4M12 9v4H8"), h8: dim(o(8, 8, 7), "M5 5l6 6M5 9V5h4M11 7v4H7"), h9: dim("M3 1h10M8 3v8M5 6l3-3 3 3M5 8l3 3 3-3M8 12v4M6 14h4"), h10: dim("M1 1l1 4v10M15 1l-1 4v10M4 10h8M6 8l-2 2 2 2M10 8l2 2-2 2M2 4h12"),
  i1: [f("#207048", "M1 3h14v10c-3 3-11 3-14 0z"), f("#58a880", "M3 4h4v11H3z"), fs("#90ccb0", "#287850", o(8, 3, 7, 2))], i2: [f("#408860", "M5 3h6l4 12H1z"), f("#a0d0b4", "M5 3h3L6 15H2z"), f("#b8dcc8", o(8, 3, 3, 1.5))],
  i3: [f("#287848", "M1 12l7-2 8-8v6l-8 7H1z"), f("#80b898", "M2 11L9 9l7-7v2l-8 8z")], i4: [f("#185c34", o(8, 8, 8)), f("#2c8450", o(7, 7, 5.5)), f("#90d0a8", o(5.5, 5.5, 2))],
  i5: [s("#1c6038", o(8, 8, 5.5), 4.4), s("#58a078", o(7.5, 7.5, 5.5), 1.5)],
  i6: [f("#303038", box(0, 2, 16, 12)), f(R, box(1, 3, 4)), f(B, box(6, 3, 4)), f("#58b838", box(11, 3, 4)), f(Y, box(1, 9, 4)), f("#c07030", box(6, 9, 4)), f(P, box(11, 9, 4))],
  i7: [f(K, box(1, 1, 14)), f(Y, box(2, 2, 5)), f(O, box(9, 2, 5)), f("#fff", box(2, 9, 5) + box(9, 9, 5)), f("#e83020", o(6, 5, 2))],
  i8: [f(R, box(0, 1, 5)), f(Y, box(5, 1, 3, 5)), f("#48b838", box(8, 1, 4, 5)), f(B, box(12, 1, 4, 5)), s(P, "M0 9h6M8 9h6M1 13h6M4 10v6", 1.8)],
  i9: [s(P, `${box(1, 1, 7, 14)}M4 1v14M1 8h7`, 1.3), fs("#60c040", G, "M8 12c4 0 4-3 3-6H9l4-5 3 5h-2c1 5-1 9-6 9z", 0.7)],
  i10: [fs("#98a0b0", "#405068", "M7 1h3v8h3l-5 5-4-5h3z"), fs("#4890d0", "#205890", "M1 11l4-1 3 3 3-3 4 1-7 5z")],
  i11: [t(V, 8, 7, 9, "2D", true), t(V, 8, 16, 9, "3D", true), s(V, "M0 8h16", 1)],
  j1: [f("#102c30", box(0, 0, 16)), s("#58c8d8", "M0 4c5-4 7 4 16 0M0 12c5-4 7 4 16 0", 2), s("#fff", "M0 8c5-4 7 4 16 0", 1.5)],
  j4: [s(P, box(1, 2, 10), 1.8, "3 1"), s(P, box(5, 6, 10, 9), 1.4, "2 1")], j5: [s(P, box(1, 1, 9, 11) + box(6, 5, 9, 10), 2)],
  j7: [f("#404040", box(0, 2, 16, 12)), f(R, box(1, 3, 4)), f(B, box(6, 3, 4)), f(Y, box(1, 9, 4)), f("#58b838", box(11, 3, 4)), fs("#c8d0d8", K, "M5 8h5V5l5 4-5 4v-3H5z", 0.6)],
  j8: [f(K, box(1, 1, 14)), f(Y, box(2, 2, 5) + box(9, 2, 5)), f("#fff", box(2, 9, 5)), f(R, o(6, 5, 2)), fs("#c8d8f0", K, "M6 10h5V7l5 4-5 4v-3H6z", 0.6)],
  j9: [f(R, box(0, 0, 5)), f(Y, box(5, 0, 3, 5)), f("#48b838", box(8, 0, 4, 5)), f(B, box(12, 0, 4, 5)), s(P, "M0 8h14M0 12h6M3 9v6", 1.6), fs("#d0d8e8", V, "M7 11h5V8l4 4-4 4v-3H7z", 0.7)],
  j10: camC(G, "M6 8h8M11 5l3 3-3 3"), j11: camC(G, "M7 8h7M10.500 4.500v7"), j12: camC(R, "M6 8h8"),
  j17: [fs("#b0b0d0", V, "M7 1h3v5h2L8.500 10 5 6h2z"), f(G, box(0, 11, 5, 4) + box(11, 11, 5, 4)), s(G, "M5 13h6", 1, "2 1")],
  j19: [s("#389898", o(8, 8, 7), 2, "7 1"), s("#e09838", box(6, 6, 4), 1.3)],
  machineGrp: [fs("#20e0ff", K, box(0.5, 0.5, 6.5) + box(9, 0.5, 6.5) + box(0.5, 9, 6.5) + box(9, 9, 6.5))],
  toolGrp: [fs("#20e0ff", "#1838a0", o(4, 4, 3.3) + o(12, 4, 3.3) + o(4, 12, 3.3) + o(12, 12, 3.3))],
  props: [s("#1010c0", "M1 13h14M3 6v7M8 2v11M13 5v8", 2.2)],
  redPlay: [fs("#f00808", "#600000", "M1 1l14 7-14 7z")],
};

function Icon({ name, className = "h-4 w-4" }) {
  return (
    <svg viewBox="0 0 16 16" aria-hidden="true" className={`${className} shrink-0 overflow-visible ${/^d[A-Z]/.test(name) ? "drop-shadow-[1px_1px_0_#ffffff]" : ""}`}>
      {(icons[name] || []).map((p, i) =>
        p.text ? (
          <text key={i} x={p.x} y={p.y} fill={p.fill} fontSize={p.size} fontWeight="bold" textAnchor="middle" fontFamily={p.sans ? "Liberation Sans, sans-serif" : "Liberation Serif, serif"}>{p.text}</text>
        ) : (
          <path key={i} d={p.d} fill={p.fill || "none"} stroke={p.stroke} strokeWidth={p.w} strokeDasharray={p.dash} />
        )
      )}
    </svg>
  );
}

const Tri = ({ dim }) => (
  <svg viewBox="0 0 5 3" aria-hidden="true" className="h-[3px] w-[5px]"><path d="M0 0h5L2.500 3z" fill={dim ? "#aaa798" : "#000"} /></svg>
);

const Chevron = ({ dim }) => (
  <svg viewBox="0 0 9 6" aria-hidden="true" className="h-1.5 w-[9px]"><path d="M1 1l3.500 3.500L8 1" fill="none" stroke={dim ? "#c0bcaa" : "#4d6185"} strokeWidth="2" /></svg>
);

const Sep = () => <span className="mx-[3px] h-5 w-0.5 shrink-0 border-l border-r border-l-[#c5c2b2] border-r-white" />;
const Grip = () => <span className="mr-1 ml-0.5 h-[22px] w-[3px] shrink-0 border-r border-l border-r-[#b0ad9c] border-l-white" />;

function Tools({ items, h = "h-6" }) {
  return items.split(" ").map((it, i) => {
    if (it === "|") return <Sep key={i} />;
    const drop = it.endsWith("+");
    const name = it.replace("+", "");
    return (
      <React.Fragment key={i}>
        <button type="button" aria-label={name} className={`flex w-[23px] shrink-0 items-center justify-center ${h}`}><Icon name={name} /></button>
        {drop && <button type="button" aria-label={`${name} menu`} className="flex h-6 w-[13px] shrink-0 items-center justify-center"><Tri dim={/^d[A-Z]/.test(name)} /></button>}
      </React.Fragment>
    );
  });
}

function Band({ items, className = "" }) {
  return (
    <div className={`flex shrink-0 items-center border-r border-[#a8a594] pr-[3px] ${className}`}>
      <Grip />
      <Tools items={items} />
    </div>
  );
}

const Row = ({ children }) => (
  <div className="flex h-[30px] shrink-0 overflow-hidden border-t border-b border-t-white border-b-[#b5b2a2]">{children}</div>
);

function VTools({ items }) {
  return items.split(" ").map((it, i) => {
    if (it === "|") return <span key={i} className="my-[3px] h-0.5 w-8 shrink-0 border-t border-b border-t-[#a8a594] border-b-white" />;
    const name = it.replace("+", "");
    return (
      <div key={i} className="flex h-[22px] shrink-0 items-center">
        <button type="button" aria-label={name} className="flex h-[22px] w-[22px] items-center justify-center"><Icon name={name} /></button>
        {it.endsWith("+") && <button type="button" aria-label={`${name} menu`} className="flex h-[22px] w-3 items-center justify-center"><Tri /></button>}
      </div>
    );
  });
}

const VGrip = () => <span className="mt-2 mb-1 h-[3px] w-[22px] shrink-0 border-t border-b border-t-white border-b-[#a8a594]" />;

const menus = [["F", "文件"], ["E", "编辑"], ["V", "视图"], ["A", "分析"], ["C", "绘图"], ["S", "实体"], ["X", "转换"], ["M", "机床类型"], ["T", "刀具路径"], ["R", "屏幕"], ["", "浮雕"], ["I", "设置"], ["H", "帮助"]];

function Coord({ axis, value }) {
  return (
    <div className="mr-3 flex shrink-0 items-center gap-1.5">
      <button type="button" className="h-[21px] w-[21px] rounded-sm border border-[#c9c7ba] bg-[#f4f3ec] text-[12px] leading-none underline">{axis}</button>
      <div className="flex h-[21px] w-[72px] items-center border border-[#c9c7ba] bg-[#ece9d8] pr-px">
        <input aria-label={`${axis} coordinate`} defaultValue={value} className="w-full min-w-0 bg-transparent pl-0.5 text-[11px] outline-none" />
        <button type="button" aria-label={`${axis} values`} className="flex h-[17px] w-4 shrink-0 items-center justify-center rounded-sm border border-[#dedbcb] bg-[#f3f1e8]"><Chevron dim /></button>
      </div>
    </div>
  );
}

function Select({ label, options, className, children, textClass = "" }) {
  return (
    <div className={`relative border border-[#7f9db9] bg-white ${className}`}>
      <select aria-label={label} className={`h-full w-full appearance-none bg-transparent pr-4 pl-0.5 outline-none ${textClass}`}>
        {options.map((x) => <option key={x}>{x}</option>)}
      </select>
      {children}
      <span className="pointer-events-none absolute top-px right-px bottom-px flex w-[15px] items-center justify-center rounded-sm bg-[#c1d3fb]"><Chevron /></span>
    </div>
  );
}

function FlatBtn({ name, active, w = "w-[22px]" }) {
  return (
    <button type="button" aria-label={name} className={`flex h-[22px] shrink-0 items-center justify-center ${w} ${active ? "rounded-[3px] border border-[#1c4478] bg-[#f4f3ec]" : "border border-t-[#f4f2e4] border-r-[#dedac8] border-b-[#dedac8] border-l-[#f4f2e4] bg-[#ece9d8]"}`}>
      <Icon name={name} />
    </button>
  );
}

const PushBtn = ({ children, className = "" }) => (
  <button type="button" className={`h-[22px] shrink-0 rounded-[3px] border border-[#1c4478] bg-[#f6f5ef] text-[12px] leading-none ${className}`}>{children}</button>
);

function Axis({ label, className, center }) {
  return (
    <div className={`absolute h-12 w-12 font-['Liberation_Mono','Noto_Sans_CJK_SC',monospace] text-[10px] leading-none font-bold ${className}`}>
      <svg viewBox="0 0 48 48" aria-hidden="true" className="absolute inset-0 h-12 w-12">
        <path d="M5.500 14v23" stroke="#00f000" fill="none" />
        <path d="M5 36.500h20" stroke={center ? "#00f000" : "#e00000"} fill="none" />
      </svg>
      <span className="absolute top-0.5 left-0.5 text-[#20f020]">Y</span>
      <span className={`absolute top-8 left-[31px] ${center ? "text-[#20f020]" : "text-[#f02020]"}`}>X</span>
      {label && <span className="absolute top-9 left-0.5 text-[12px] font-normal text-[#d8d8d8]">{label}</span>}
    </div>
  );
}

const Expander = ({ open }) => (
  <button type="button" aria-label={open ? "Collapse" : "Expand"} aria-expanded={!!open} className="flex h-[9px] w-[9px] shrink-0 items-center justify-center border border-[#8a96a8] bg-[#f4f3ec]">
    <svg viewBox="0 0 5 5" aria-hidden="true" className="h-[5px] w-[5px]"><path d={open ? "M0 2.500h5" : "M0 2.500h5M2.500 0v5"} stroke="#000" /></svg>
  </button>
);

const StatusBtn = ({ children, className = "" }) => (
  <button type="button" className={`h-[21px] shrink-0 rounded-[3px] border border-[#d4d1c0] bg-[#f4f2e8] text-[12px] leading-none whitespace-nowrap ${className}`}>{children}</button>
);

const Caption = ({ kind, color }) => (
  <button type="button" aria-label={kind} className={`flex h-[21px] w-[21px] items-center justify-center rounded-[3px] border border-white ${color}`}>
    <svg viewBox="0 0 16 16" aria-hidden="true" className="h-4 w-4">
      <path fill="none" stroke="#fff" strokeWidth="2" d={kind === "Minimize" ? "M3 12.500h6" : kind === "Restore" ? "M3 7.500h7v6H3zM6 7V3.500h7v6h-3" : "M3.500 3.500l9 9M12.500 3.500l-9 9"} />
    </svg>
  </button>
);

const mono = "font-['Liberation_Mono','Noto_Sans_CJK_SC',monospace]";
const Colon = () => <span className="inline-block w-3 pl-0.5">:</span>;

export default function App() {
  return (
    <div className="flex min-h-screen w-full flex-col overflow-hidden border-b-2 border-[#3a78d8] bg-[#ece9d8] font-['Liberation_Sans','Noto_Sans_CJK_SC',sans-serif] text-[12px] text-black">
      <header className="relative flex h-[26px] shrink-0 items-center bg-linear-to-b from-[#3a93ff] via-[#0054e3] via-20% to-[#0062fa] px-0.5">
        <span className="absolute top-0 left-20 h-[5px] w-[152px] border-r border-b border-[#a8a594] bg-[#ece9d8]" />
        <Icon name="logo" />
        <h1 className={`ml-1 flex-1 text-[13px] font-bold text-white [text-shadow:1px_1px_#0a2a80] ${mono}`}>Mastercam Mill X3</h1>
        <div className="flex gap-0.5">
          <Caption kind="Minimize" color="bg-[#3a72ec]" />
          <Caption kind="Restore" color="bg-[#3a72ec]" />
          <Caption kind="Close" color="bg-[#e0512c]" />
        </div>
      </header>

      <nav className="flex h-[21px] shrink-0 items-center gap-3 px-1.5">
        {menus.map(([k, label]) => (
          <button type="button" key={label} className="flex items-center gap-1.5 leading-none">
            {k && <span className={`text-[10px] underline underline-offset-2 ${mono}`}>{k}</span>}
            <span>{label}</span>
          </button>
        ))}
      </nav>

      <Row>
        <Band className="w-[199px]" items="newFile openFile saveFile dPrint dPreview plug copyFile paste" />
        <Band className="w-[61px]" items="dUndo dRedo" />
        <Band className="w-[269px]" items="pan dynamic | zoomIn zoomWin zoomTarget | zoomOutDot zoomOut | cylA cylB cylC" />
        <div className="w-[61px] shrink-0 border-r border-[#a8a594]" />
        <Band className="w-[52px]" items="redView+" />
        <Band className="w-[86px]" items="globe+ sphere+" />
        <Band className="w-[118px]" items="eraser erasers+ | dBrush+" />
        <Band items="lineQ swap | wires orangeSq sigma greenC+" />
      </Row>
      <Row>
        <Band className="w-[437px]" items="cubeHole cubeSq | contour drillDown pocket face toolArrow | circMill ringTool slot helix | checkTool pocketRed | arrowPlus squareIn expand solidP" />
        <Band className="w-[306px]" items="toolMill machine | parLines hatchTri raster scallop plunge blend waves circDash | pencilBlue leftover" />
        <Band className="w-[238px]" items="toolMill | sfA sfB sfC sfD sfE | sfF sfG sfH" />
      </Row>

      <div className="flex h-[31px] shrink-0 items-center border-b border-[#a8a594] pl-[187px]">状态栏</div>

      <div className="flex h-[31px] shrink-0 items-center overflow-hidden border-b border-[#a8a594] bg-[#ffffc8] pl-[5px]">
        <Coord axis="X" value="-4.20277" />
        <Coord axis="Y" value="-0.3984" />
        <Coord axis="Z" value="0.0" />
        <div className="-ml-1.5 flex items-center gap-0.5">
          <FlatBtn name="dFast" />
          <FlatBtn name="dBang" />
          <FlatBtn name="dPanel" />
          <button type="button" aria-label="More" className="flex h-[22px] w-3 items-center justify-center bg-[#ece9d8]"><Tri dim /></button>
          <FlatBtn name="help" active />
        </div>
        <span className="ml-2 h-full w-px bg-[#b5b2a2]" />
        <span className="ml-1 h-[22px] w-0.5 border-r border-[#b0ad9c]" />
        <div className="ml-2 flex flex-1 items-center gap-2">
          <PushBtn className="w-[46px]">全部...</PushBtn>
          <PushBtn className="ml-0.5 w-[45px]">单一...</PushBtn>
          <FlatBtn name="cursorBolt" active />
          <Select label="窗选方式" options={["视窗内"]} className="h-[22px] w-[72px] shrink-0" textClass="text-[12px]" />
          <div className="ml-1 flex items-center bg-[#ece9d8]">
            <FlatBtn name="dashBox" />
            <button type="button" aria-label="Selection menu" className="flex h-[22px] w-3.5 items-center justify-center"><Tri /></button>
            <FlatBtn name="dCursor" w="w-6" /><FlatBtn name="dHex" w="w-6" />
          </div>
          <div className="flex gap-0.5"><FlatBtn name="dHex" /><FlatBtn name="dHex" /><FlatBtn name="dHex" /></div>
          <div className="flex gap-0.5"><FlatBtn name="dCube" /><FlatBtn name="dArc" /></div>
          <FlatBtn name="cursorCheck" active />
          <div className="flex gap-0.5"><FlatBtn name="dNo" /><FlatBtn name="dDisc" /></div>
          <FlatBtn name="help" active />
        </div>
      </div>

      <main className="flex flex-1 items-stretch">
        <aside aria-label="实体" className="flex w-[42px] shrink-0 flex-col border-r border-[#a8a594] pl-[3px]">
          <span className="mt-2 mb-1 h-[3px] w-9 shrink-0 border-t border-b border-t-white border-b-[#a8a594]" />
          <VTools items="extrude revolve sweep loft filletS+ | shellS boolS+ draftS trimS cubeDark | pushS cubeGrid cubeWire solidSurf dBlock dSwap dArc dDisc dNo" />
        </aside>

        <section className="flex w-[189px] shrink-0 flex-col border-r-2 border-b border-[#8c8a80]">
          <div className="flex h-[19px] items-center gap-1.5 bg-[#d4d0c8] px-[5px]">
            <h2 className="flex-1 text-[11px] text-[#404040]">操作管理</h2>
            <button type="button" aria-label="Panel menu" className="flex h-[15px] w-[15px] items-center justify-center rounded-sm border border-[#1c4478] bg-white"><svg viewBox="0 0 7 4" aria-hidden="true" className="h-1 w-[7px]"><path d="M0 0h7L3.500 4z" /></svg></button>
            <button type="button" className={`flex h-[15px] w-[15px] items-center justify-center rounded-sm border border-[#1c4478] bg-white text-[10px] ${mono}`}>X</button>
          </div>
          <div className="flex h-[22px] items-stretch">
            <button type="button" className="w-[98px] border-t-2 border-r border-t-[#f0981c] border-r-[#8c8a80] bg-[#fcfcfa]">刀具路径管理器</button>
            <button type="button" className="mt-0.5 flex-1 border-b border-[#a8b0b8] bg-[#f4f3ec] whitespace-nowrap">实体管理</button>
            <div className="mb-1 flex w-8 bg-[#c6d3f7]">
              <button type="button" aria-label="Previous tab" className="flex w-4 items-center justify-center"><svg viewBox="0 0 4 6" className="h-1.5 w-1"><path d="M4 0v6L0 3z" fill="#3c5488" /></svg></button>
              <button type="button" aria-label="Next tab" className="flex w-4 items-center justify-center"><svg viewBox="0 0 4 6" className="h-1.5 w-1"><path d="M0 0v6l4-3z" fill="#3c5488" /></svg></button>
            </div>
          </div>
          <div className="flex flex-1 flex-col border-l-2 border-white px-0.5 pt-px pb-[5px]">
            <div className="flex h-8 items-center border-t border-b border-[#b5b2a2] pl-1"><Tools items="dCheckPlay dCheckX | dTPlay dTX | dSquare dBlob dG1" /></div>
            <div className="flex h-8 items-center pl-1"><Tools items="dLock dWaves dLock | dDown dUp dStep dUpDown |" /></div>
            <div className="mt-1 flex flex-1 flex-col border border-[#7f9db9] bg-white">
              <ul className={`flex-1 overflow-hidden pt-px text-[10px] whitespace-nowrap ${mono}`}>
                <li className="flex h-4 items-center gap-1.5 pl-2"><Expander open /><Icon name="machineGrp" className="h-[15px] w-[15px]" />Machine Group-1</li>
                <li className="flex h-4 items-center pl-[27px]"><Expander /><span className="w-1.5 border-t border-dotted border-[#606060]" /><Icon name="props" className="h-[15px] w-[15px]" /><span className="ml-1 flex items-center"><span className="text-[12px] leading-none">属性</span><span className="whitespace-pre"> - Generic Mill</span></span></li>
                <li className="flex h-4 items-center pl-[27px]"><Expander open /><span className="w-1.5 border-t border-dotted border-[#606060]" /><Icon name="toolGrp" className="h-[15px] w-[15px]" /><span className="ml-1">Toolpath Group-1</span></li>
                <li className="flex h-4 items-center pl-[50px]"><span className="mb-2 h-2 w-2.5 border-b border-l border-dotted border-[#606060]" /><Icon name="redPlay" /><span className="mr-px ml-1 h-4 flex-1 bg-[#ece9d8]" /></li>
              </ul>
              <div className="flex h-[17px] gap-0.5 bg-[#f6f5ef] px-px">
                <button type="button" aria-label="Scroll left" className="flex w-4 items-center justify-center rounded-sm bg-[#c6d5fc]"><svg viewBox="0 0 6 9" className="h-[9px] w-1.5"><path d="M5 1L1.500 4.500 5 8" fill="none" stroke="#4d6185" strokeWidth="2" /></svg></button>
                <div className="flex w-[52px] items-center justify-center rounded-sm border border-[#98b0e8] bg-[#c6d5fc]"><span className="h-1.5 w-2 bg-[repeating-linear-gradient(90deg,#8ca8e8_0,#8ca8e8_1px,#eef4fe_1px,#eef4fe_2px)]" /></div>
                <button type="button" aria-label="Scroll right" className="ml-auto flex w-4 items-center justify-center rounded-sm bg-[#c6d5fc]"><svg viewBox="0 0 6 9" className="h-[9px] w-1.5"><path d="M1 1l3.500 3.500L1 8" fill="none" stroke="#4d6185" strokeWidth="2" /></svg></button>
              </div>
            </div>
          </div>
        </section>

        <section aria-label="绘图区" className="relative min-w-0 flex-1 overflow-hidden bg-black">
          <span className="absolute top-0 left-[359px] h-[187px] w-px bg-[#b86010]" />
          <span className="absolute top-[187px] bottom-0 left-[359px] w-px bg-[#7c3c10]" />
          <span className="absolute top-[187px] left-0 h-px w-[359px] bg-[#7c3c10]" />
          <span className="absolute top-[187px] right-0 left-[359px] h-px bg-[#b86010]" />
          <Axis label="绘" className="top-[25px] left-9" />
          <Axis label="刀" className="top-[25px] right-[17px]" />
          <Axis className="bottom-[28px] left-9" />
          <Axis center className="top-[151px] left-[355px]" />
          <p className="absolute bottom-2 left-2 flex gap-[21px] text-[12px] leading-none text-[#c8c8c8]">
            <span>视角<Colon />俯视图</span>
            <span><span className={`text-[10px] ${mono}`}>WCS</span><Colon />俯视图</span>
            <span>刀具/绘图平面<Colon />俯视图</span>
          </p>
          <div className="absolute right-[23px] bottom-3 flex h-6 w-[97px] flex-col border-r border-l border-[#e8e800]">
            <span className={`h-3 border-b border-[#e8e800] pr-[18px] text-right text-[11px] leading-[9px] font-bold text-[#20f020] ${mono}`}>3.493</span>
            <span className="h-3 pl-6 text-[12px] leading-[16px] text-[#c8c8c8]">公制</span>
          </div>
          <div role="dialog" aria-label="HSM" className="absolute top-[70px] left-[194px] w-[290px] border-[3px] border-t border-[#0038c8] bg-[#ece9d8]">
            <div className="flex h-[22px] items-center justify-between bg-linear-to-b from-[#2a80fa] via-[#0058e8] via-25% to-[#0068fc] px-0.5">
              <span className={`text-[10px] font-bold text-white ${mono}`}>HSM■</span>
              <button type="button" aria-label="Close" className="flex h-[13px] w-[13px] items-center justify-center rounded-sm border border-white bg-[#e0512c]"><svg viewBox="0 0 8 8" className="h-2 w-2"><path d="M1 1l6 6M7 1L1 7" stroke="#fff" strokeWidth="1.500" /></svg></button>
            </div>
            <div className="flex h-7 items-center pl-[3px]"><Tools items="drill hArc hRings hRough hRest hFlat hBits hBall hBalls hRadial hSpiral hTeeth" /></div>
          </div>
        </section>

        <aside aria-label="工具栏" className="flex w-[62px] shrink-0 border-l border-white">
          <div className="flex w-8 flex-col items-center border-r border-[#a8a594]">
            <VGrip />
            <VTools items="hArc drill zoomOutDot zoomWin pan axGreen axBrown axBlue gridPlus" />
            <span className="mt-5 w-full border-t border-[#a8a594]" />
            <VGrip />
            <VTools items="qPlus qSurf qLine qCirc qStep qGrid qSolid qGlobe" />
            <span className="my-0.5 w-5 border-t border-[#a8a594]" />
            <button type="button" aria-label="qAll" className="flex h-4 items-center justify-center"><Icon name="qAll" /></button>
          </div>
          <div className="flex flex-1 flex-col items-center">
            <VGrip />
            <VTools items="gvTop gvBackL gvRight gvLeft gvBack gvBot gvIso" />
            <span className="mt-1 w-full border-t border-[#a8a594]" />
            <VGrip />
            <VTools items="rv1 rv2 rv3 rv4 rv5 rv6 rv7 rv8 rv9 rv10" />
            <span className="mt-1 w-full border-t border-[#a8a594]" />
          </div>
        </aside>
      </main>

      <Row>
        <Band className="w-[566px]" items="a1 a2 a3 a4 a5 a6 a7 a8 a9 a10 a11 a12 a13 a14 a15 a16 a17 a18 a19 a20 a21 a22 a23 a24" />
        <Band items="b1 b2 b3 b4 b5 b6 b7 dPencil b8 b9 b10 b11 b12 b13 b14 b15 b16 b17 b18" />
      </Row>
      <Row>
        <Band items="c1 c2 c3 c4 c5 c6 c7 c8 c9 c10 c11 c12 c13 c14 c16 c17 c18 c19 c20 c21 c22 c23 c24 c25 c26 c27 c28 c29 c30 c31 c32 c33 c34 c35 c36 c37 c38 c39 c40 c41 c42 c43 c44 c45" />
      </Row>
      <Row>
        <Band className="w-[382px]" items="e1 e2 e3 e4 e5 e6 e7 e8 e9 e10 e11 e12 e13 e14 e15 e16" />
        <div className="w-[292px] border-r border-[#a8a594]" />
        <Band items="g1 g2 g3 g4 g5 g6 g7 g8 g9 g10 g11 g12 g13 g14" />
      </Row>
      <Row>
        <Band className="w-[281px]" items="bulb+ h1 h2 h3 h4 h5 h6 h7 h8 h9 h10" />
        <Band className="w-[267px]" items="i1 i2 i3 i4 i5 i6 i7 i8 i9 i10 i11" />
        <div className="flex min-w-0 flex-1 items-center overflow-hidden">
          <Grip />
          <Tools items="j1 orangeSq swap j4 j5 sigma j7 j8 j9 j10 j11 j12 dynamic axBrown axBlue axGreen j17 gridPlus j19 e16" />
          <span className="h-5 w-3 shrink-0 rounded-l-[3px] border border-[#1c4478] bg-white" />
        </div>
      </Row>

      <footer className="flex h-[25px] shrink-0 items-center overflow-hidden border-t border-[#a8a594]">
        <span className="w-[130px] shrink-0 pl-0.5">帮助, 按 <span className={`text-[10px] ${mono}`}>Alt+H.</span></span>
        <div className="flex shrink-0 items-center gap-1.5">
          <StatusBtn className={`w-[25px] ${mono}`}><span className="text-[10px]">3D</span></StatusBtn>
          <StatusBtn className="w-[50px]">屏幕视角</StatusBtn>
          <StatusBtn className="w-[50px]">刀具平面</StatusBtn>
        </div>
        <label htmlFor="zDepth" className={`ml-5 self-start text-[10px] leading-5 ${mono}`}>Z</label>
        <div className="flex h-[22px] w-[110px] shrink-0 items-center border border-[#7f9db9] bg-[#ffff80] pr-px">
          <span className="flex flex-1 items-center pl-0.5"><input id="zDepth" defaultValue="0.0" className="h-4 w-[21px] bg-[#316ac5] text-[14px] text-white outline-none" /></span>
          <button type="button" aria-label="Z values" className="flex h-[18px] w-[15px] items-center justify-center rounded-sm bg-[#c1d3fb]"><Chevron /></button>
        </div>
        <button type="button" className={`ml-[5px] h-[18px] w-[53px] shrink-0 bg-[#00ff00] text-[10px] ${mono}`}>10</button>
        <button type="button" aria-label="Colour menu" className="flex h-[18px] w-4 shrink-0 items-center justify-center border border-[#d4d1c0] bg-[#f4f2e8]"><svg viewBox="0 0 9 8" className="h-2 w-[9px]"><path d="M0 0h9L4.500 8z" /></svg></button>
        <span className="ml-3 shrink-0">层别</span>
        <Select label="层别" options={["1"]} className="ml-[3px] h-[22px] min-w-0 flex-1" textClass={`text-[10px] ${mono}`} />
        <div className="ml-1.5 flex shrink-0 items-center gap-1">
          <StatusBtn className="w-[38px]">属性</StatusBtn>
          <Select label="点型" options={["*"]} className="ml-0.5 h-[22px] w-[34px]" textClass="text-[14px]" />
          <Select label="线宽" options={[""]} className="h-[22px] w-[64px]"><span className="pointer-events-none absolute top-[9px] left-0.5 h-[3px] w-[42px] bg-black" /></Select>
          <Select label="线型" options={[""]} className="h-[22px] w-[64px]"><span className="pointer-events-none absolute top-2.5 left-0.5 h-px w-[42px] bg-black" /></Select>
          <StatusBtn className={`w-[46px] ${mono}`}><span className="text-[10px]">WCS</span></StatusBtn>
          <StatusBtn className="w-[50px]">群组</StatusBtn>
          <StatusBtn className={`w-[19px] ${mono}`}><span className="text-[10px]">!</span></StatusBtn>
          <StatusBtn className={`w-[14px] ${mono}`}><span className="text-[10px]">?</span></StatusBtn>
        </div>
      </footer>
    </div>
  );
}
